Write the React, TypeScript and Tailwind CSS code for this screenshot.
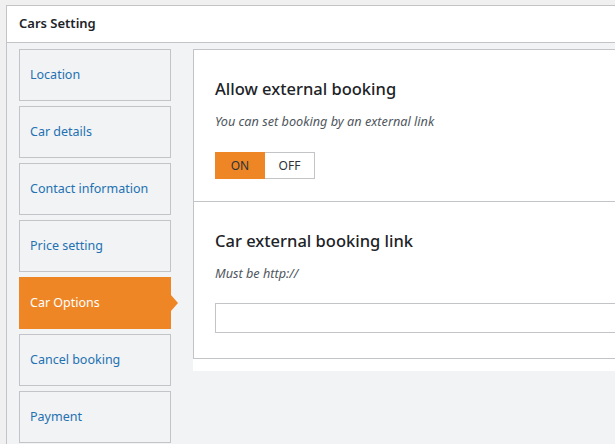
import React from "react";

const tabs = [
  "Location",
  "Car details",
  "Contact information",
  "Price setting",
  "Car Options",
  "Cancel booking",
  "Payment",
];

export default function App() {
  return (
    <div
      className="w-[615px] h-[444px] overflow-hidden bg-[#f0f0f1] pt-[5px] pl-[6px]"
      style={{ fontFamily: '"Noto Sans", sans-serif' }}
    >
      <div className="w-[720px] h-[500px] border border-[#c3c4c7] bg-[#f2f3f5]">
        <div className="h-[37px] bg-white border-b border-[#c3c4c7] flex items-center pl-[12px]">
          <span className="text-[13px] font-semibold text-[#1d2327]">Cars Setting</span>
        </div>
        <div className="flex pt-[6px] pl-[12px]">
          <div className="w-[152px] flex flex-col gap-[5px]">
            {tabs.map((t) =>
              t === "Car Options" ? (
                <div
                  key={t}
                  className="relative h-[52px] bg-[#ef8626] flex items-center pl-[11px] text-[12.5px] text-white"
                >
                  {t}
                  <div className="absolute right-[-7px] top-[18px] w-0 h-0 border-y-[8px] border-y-transparent border-l-[7px] border-l-[#ef8626]" />
                </div>
              ) : (
                <div
                  key={t}
                  className="h-[52px] border border-[#c3c4c7] flex items-center pl-[10px] text-[12.5px] text-[#2271b1]"
                >
                  {t}
                </div>
              )
            )}
          </div>
          <div className="ml-[22px] flex-1 bg-white pb-[12px] self-start">
            <div className="h-[153px] border border-[#c3c4c7] pl-[21px] pt-[28px]">
              <h2 className="text-[16.5px] font-medium text-[#1d2327] leading-[22px]">
                Allow external booking
              </h2>
              <p className="mt-[12px] text-[12.7px] italic text-[#50575e] leading-[18px]">
                You can set booking by an external link
              </p>
              <div className="mt-[22px] flex">
                <div className="w-[50px] h-[27px] bg-[#ef8626] flex items-center justify-center text-[12px] text-[#2c3338]">
                  ON
                </div>
                <div className="w-[50px] h-[27px] border border-l-0 border-[#c3c4c7] bg-white flex items-center justify-center text-[12px] text-[#2c3338]">
                  OFF
                </div>
              </div>
            </div>
            <div className="h-[157px] border border-t-0 border-[#c3c4c7] pl-[21px] pt-[28px]">
              <h2 className="text-[16.5px] font-medium text-[#1d2327] leading-[22px]">
                Car external booking link
              </h2>
              <p className="mt-[12px] text-[12.7px] italic text-[#50575e] leading-[18px]">
                Must be http://
              </p>
              <div className="mt-[21px] h-[30px] border border-[#c3c4c7] bg-white" />
            </div>
          </div>
        </div>
      </div>
    </div>
  );
}
